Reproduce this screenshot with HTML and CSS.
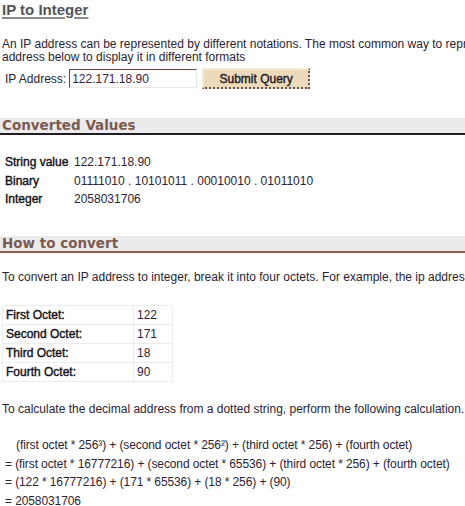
FILE: index.html
```html
<!DOCTYPE html>
<html>
<head>
<meta charset="utf-8">
<link rel="stylesheet" href="styles.css">
</head>
<body>
<h1 class="title">IP to Integer</h1>
<p class="intro">An IP address can be represented by different notations. The most common way to represent an IP address is the dotted string. Enter an IP<br>address below to display it in different formats</p>
<form class="query">
  <label class="query-label">IP Address:</label>
  <input class="query-input" type="text" value="122.171.18.90">
  <button class="query-btn" type="button">Submit Query</button>
</form>

<h2 class="section section-dark">Converted Values</h2>
<div class="values">
  <div class="val-label">String value</div><div class="val">122.171.18.90</div>
  <div class="val-label">Binary</div><div class="val">01111010 . 10101011 . 00010010 . 01011010</div>
  <div class="val-label">Integer</div><div class="val">2058031706</div>
</div>

<h2 class="section section-brown">How to convert</h2>
<p class="para">To convert an IP address to integer, break it into four octets. For example, the ip address 122.171.18.90 can be broken down into</p>
<table class="octets">
  <tr><td class="oct-label">First Octet:</td><td class="oct-val">122</td></tr>
  <tr><td class="oct-label">Second Octet:</td><td class="oct-val">171</td></tr>
  <tr><td class="oct-label">Third Octet:</td><td class="oct-val">18</td></tr>
  <tr><td class="oct-label">Fourth Octet:</td><td class="oct-val">90</td></tr>
</table>
<p class="para calc">To calculate the decimal address from a dotted string, perform the following calculation.</p>
<div class="formula">
  <div class="f-line f-first">(first octet * 256³) + (second octet * 256²) + (third octet * 256) + (fourth octet)</div>
  <div class="f-line">= (first octet * 16777216) + (second octet * 65536) + (third octet * 256) + (fourth octet)</div>
  <div class="f-line">= (122 * 16777216) + (171 * 65536) + (18 * 256) + (90)</div>
  <div class="f-line">= 2058031706</div>
</div>
</body>
</html>
```

FILE: styles.css
```css
html, body {
  margin: 0;
  padding: 0;
  background: #fff;
  overflow: hidden;
}
body {
  font-family: "Liberation Sans", Arial, sans-serif;
  font-size: 12px;
  color: #2b2333;
  width: 465px;
  height: 506px;
}
.title {
  margin: 0;
  padding: 1px 2px 0;
  height: 18px;
  font-size: 15px;
  line-height: 18px;
  font-weight: bold;
  color: #555;
  text-decoration: underline;
  text-decoration-color: #8a8a8a;
  text-decoration-thickness: 2px;
  text-underline-offset: 2px;
}
.intro {
  margin: 19px 0 0;
  padding: 0 2px;
  line-height: 13px;
  white-space: nowrap;
}
.query {
  margin: 4px 0 0;
  padding: 0 0 0 5px;
  display: flex;
  align-items: center;
  height: 21px;
}
.query-label {
  margin-right: 3px;
}
.query-input {
  box-sizing: border-box;
  width: 128px;
  height: 19px;
  margin: 0;
  padding: 0 2px;
  font-family: "Liberation Sans", Arial, sans-serif;
  font-size: 12px;
  color: #3a2040;
  border: 1px solid #ece6e6;
  border-left-color: #6a4444;
  border-top-color: #6a4444;
  background: #fff;
}
.query-btn {
  box-sizing: border-box;
  margin: 0 0 0 5px;
  width: 108px;
  height: 21px;
  padding: 0;
  font-family: "Liberation Sans", Arial, sans-serif;
  font-size: 12px;
  color: #1e1a28;
  -webkit-text-stroke: 0.4px #1e1a28;
  background: #ecdabb;
  border: 2px solid #f4ead8;
  border-right: 2px dotted #6a5050;
  border-bottom: 2px dotted #6a5050;
}
.section {
  margin: 29px 0 0;
  padding: 0 2px;
  height: 15px;
  line-height: 15px;
  font-family: "DejaVu Sans", Verdana, sans-serif;
  font-size: 13.5px;
  font-weight: bold;
  color: #7b5a50;
  background: #ebebeb;
  overflow: hidden;
}
.section-dark {
  border-bottom: 2px solid #231c24;
}
.section-brown {
  border-bottom: 2px solid #8c5c52;
  margin-top: 27px;
}
.values {
  margin: 18px 0 0;
  padding: 0 0 0 5px;
  display: grid;
  grid-template-columns: 69px auto;
  grid-auto-rows: 18.7px;
  line-height: 18.7px;
}
.val-label,
.oct-label {
  color: #141218;
  -webkit-text-stroke: 0.4px #141218;
}
.para {
  margin: 18px 0 0;
  padding: 0 2px;
  line-height: 13px;
  white-space: nowrap;
}
.octets {
  margin: 21px 0 0 2px;
  border-collapse: collapse;
}
.octets td {
  border: 1px solid #ececec;
  height: 18px;
  padding: 0 3px;
  vertical-align: middle;
}
.oct-label {
  width: 124px;
}
.oct-val {
  width: 32px;
}
.calc {
  margin-top: 21px;
}
.formula {
  margin: 20px 0 0;
  padding: 0 0 0 5px;
  white-space: nowrap;
  letter-spacing: -0.1px;
}
.f-line {
  line-height: 18.5px;
  height: 18.5px;
}
.f-first {
  padding-left: 11px;
}
```
